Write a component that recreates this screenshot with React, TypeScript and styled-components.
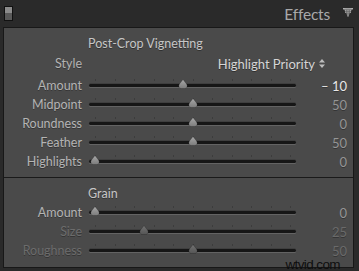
import styled, { createGlobalStyle } from "styled-components";

const GlobalStyle = createGlobalStyle`
  html, body { margin: 0; padding: 0; background: #2a2a2a; }
`;

const Frame = styled.div`
  position: relative;
  width: 359px;
  height: 271px;
  background: #2a2a2a;
  font-family: Lato, "Open Sans", sans-serif;
  overflow: hidden;
`;

const Header = styled.div`
  height: 27px;
  display: flex;
  align-items: center;
  padding: 0 6px 0 4px;
  box-sizing: border-box;
`;

const SoloSwitch = styled.div`
  width: 7px;
  height: 13px;
  border: 1px solid #111;
  background: linear-gradient(#8c8c8c 0 50%, #5a5a5a 50% 100%);
  margin-top: -1px;
`;

const PanelTitle = styled.div`
  margin-left: auto;
  font-size: 15.5px;
  color: #a9a9a9;
  letter-spacing: -0.2px;
  margin-right: 13px;
`;

const Panel = styled.div`
  margin: 0 5px 0 3px;
  height: 241px;
  box-sizing: border-box;
  border: 1px solid #181818;
  background: #4a4a4a;
`;

const Section = styled.section<{ $bottom: number }>`
  padding: 8px 0 ${(p) => p.$bottom}px;
`;

const SectionTitle = styled.div<{ $gap?: number }>`
  height: 15px;
  line-height: 15px;
  padding-left: 84px;
  font-size: 12.5px;
  color: #c6c6c6;
  text-shadow: 0 1px 0 rgba(0, 0, 0, 0.35);
  margin-bottom: ${(p) => p.$gap ?? 2}px;
`;

const Row = styled.div<{ $after?: number }>`
  display: grid;
  grid-template-columns: 78px 207px 44px;
  column-gap: 7px;
  height: 19px;
  align-items: center;
  margin-bottom: ${(p) => p.$after ?? 0}px;
`;

const Label = styled.div<{ $dim?: boolean }>`
  text-align: right;
  font-size: 12.5px;
  color: ${(p) => (p.$dim ? "#6c6c6c" : "#b4b4b4")};
  text-shadow: 0 1px 0 rgba(0, 0, 0, 0.3);
  white-space: nowrap;
`;

const Value = styled.div<{ $tone: "bright" | "normal" | "dim" }>`
  text-align: right;
  font-size: 13px;
  margin-left: -7px;
  color: ${(p) => (p.$tone === "bright" ? "#e8e8e8" : p.$tone === "dim" ? "#6a6a6a" : "#959595")};
  text-shadow: 0 1px 0 rgba(0, 0, 0, 0.3);
`;

const Select = styled.div`
  grid-column: 2 / 4;
  justify-self: end;
  margin-right: 22px;
  display: flex;
  align-items: center;
  gap: 4px;
  font-size: 13px;
  color: #d6d6d6;
  text-shadow: 0 1px 0 rgba(0, 0, 0, 0.35);
`;

const Track = styled.div`
  position: relative;
  height: 3px;
  border-radius: 2px;
  background: #161616;
  box-shadow: 0 1px 0 rgba(255, 255, 255, 0.14), 0 -1px 0 rgba(0, 0, 0, 0.15);
`;

const Tick = styled.span`
  position: absolute;
  top: -5px;
  width: 1px;
  height: 2px;
  background: #3c3c3c;
`;

const Thumb = styled.svg`
  position: absolute;
  top: -5px;
  width: 10px;
  height: 10px;
  margin-left: -5px;
`;

const Divider = styled.div`
  height: 1px;
  background: #1a1a1a;
`;

const Watermark = styled.div`
  position: absolute;
  right: 19px;
  bottom: 0;
  line-height: 13px;
  font-family: "Liberation Sans", Arial, sans-serif;
  font-size: 13.5px;
  letter-spacing: -0.6px;
  color: #0e0e0e;
`;

type SliderDef = {
  label: string;
  frac: number;
  value: string;
  tone: "bright" | "normal" | "dim";
  dim?: boolean;
};

const vignette: SliderDef[] = [
  { label: "Amount", frac: 0.45, value: "– 10", tone: "bright" },
  { label: "Midpoint", frac: 0.5, value: "50", tone: "normal" },
  { label: "Roundness", frac: 0.5, value: "0", tone: "normal" },
  { label: "Feather", frac: 0.5, value: "50", tone: "normal" },
  { label: "Highlights", frac: 0, value: "0", tone: "normal" },
];

const grain: SliderDef[] = [
  { label: "Amount", frac: 0, value: "0", tone: "normal" },
  { label: "Size", frac: 0.25, value: "25", tone: "dim", dim: true },
  { label: "Roughness", frac: 0.5, value: "50", tone: "dim", dim: true },
];

function Slider({ def }: { def: SliderDef }) {
  const fill = def.dim ? "#737373" : "#a8a8a8";
  const dark = def.dim ? "#555" : "#7c7c7c";
  const id = "g" + def.label + def.frac;
  return (
    <Row>
      <Label $dim={def.dim}>{def.label}</Label>
      <Track>
        {Array.from({ length: 11 }, (_, i) => (
          <Tick key={i} style={{ left: 6 + i * 19.5 }} />
        ))}
        <Thumb viewBox="0 0 10 10" style={{ left: 6 + def.frac * 195 }}>
          <defs>
            <linearGradient id={id} x1="0" y1="0" x2="0" y2="1">
              <stop offset="0" stopColor={fill} />
              <stop offset="1" stopColor={dark} />
            </linearGradient>
          </defs>
          <path
            d="M5 0.5 L8.6 5 Q9.8 6.6 8.8 8.4 Q8.2 9.5 6.8 9.5 H3.2 Q1.8 9.5 1.2 8.4 Q0.2 6.6 1.4 5 Z"
            fill={`url(#${id})`}
            stroke="rgba(0,0,0,0.35)"
            strokeWidth="0.6"
          />
        </Thumb>
      </Track>
      <Value $tone={def.tone}>{def.value}</Value>
    </Row>
  );
}

function Triangle() {
  const dots = [];
  const rows = [9, 7, 5, 3, 1];
  for (let r = 0; r < rows.length; r++) {
    const n = rows[r];
    const start = (9 - n) / 2;
    for (let c = 0; c < n; c++) {
      if ((c + r) % 2 === 0 || r === 0) {
        dots.push(<rect key={r + "-" + c} x={start + c} y={r * 1.6} width="1" height="1.2" fill="#b8b8b8" />);
      }
    }
  }
  return (
    <svg width="10" height="9" viewBox="0 0 9 8" style={{ marginTop: -2 }}>
      <path d="M0 0 H9 L4.5 8 Z" fill="#5e5e5e" />
      {dots}
    </svg>
  );
}

export default function App() {
  return (
    <Frame>
      <GlobalStyle />
      <Header>
        <SoloSwitch />
        <PanelTitle>Effects</PanelTitle>
        <Triangle />
      </Header>
      <Panel>
        <Section $bottom={6}>
          <SectionTitle $gap={3}>Post-Crop Vignetting</SectionTitle>
          <Row $after={3}>
            <Label>Style</Label>
            <Select>
              Highlight Priority
              <svg width="6" height="9" viewBox="0 0 6 9">
                <path d="M3 0 L6 3.5 H0 Z M3 9 L6 5.5 H0 Z" fill="#bdbdbd" />
              </svg>
            </Select>
          </Row>
          {vignette.map((d) => (
            <Slider key={d.label} def={d} />
          ))}
        </Section>
        <Divider />
        <Section $bottom={7}>
          <SectionTitle>Grain</SectionTitle>
          {grain.map((d) => (
            <Slider key={"g" + d.label} def={d} />
          ))}
        </Section>
      </Panel>
      <Watermark>wtvid.com</Watermark>
    </Frame>
  );
}
